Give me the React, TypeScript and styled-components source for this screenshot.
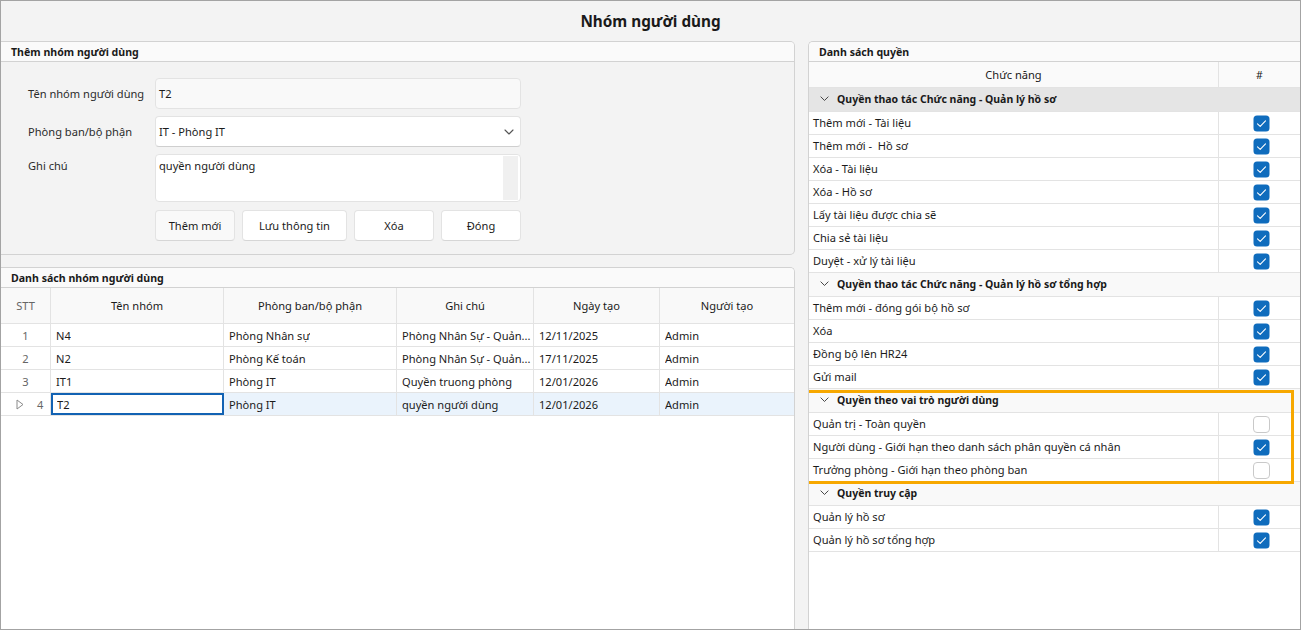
import React from 'react';
import styled, { createGlobalStyle } from 'styled-components';

const Global = createGlobalStyle`
  html, body { margin: 0; padding: 0; background: #f3f3f3; }
  * { box-sizing: border-box; }
  body {
    font-family: "Noto Sans", "Open Sans", sans-serif;
    font-size: 11.1px;
    color: #1b1b1b;
  }
`;

const Window = styled.div`
  width: 1301px;
  height: 630px;
  border: 1px solid #a3a3a3;
  background: #f3f3f3;
  display: flex;
  flex-direction: column;
  overflow: hidden;
`;

const TitleBar = styled.div`
  height: 40px;
  flex: none;
  display: flex;
  align-items: center;
  justify-content: center;
  font-weight: 700;
  font-size: 15.3px;
  color: #1a1a1a;
`;

const Main = styled.div`
  flex: 1;
  display: flex;
  gap: 13px;
  min-height: 0;
`;

const LeftCol = styled.div`
  width: 794px;
  flex: none;
  display: flex;
  flex-direction: column;
  gap: 12px;
`;

const Panel = styled.section<{ $h?: number; $side: 'left' | 'right' }>`
  ${(p) => (p.$h ? `height: ${p.$h}px; flex: none;` : 'flex: 1; min-height: 0;')}
  display: flex;
  flex-direction: column;
  background: #f3f3f3;
  border: 1px solid #d2d2d2;
  ${(p) => (p.$side === 'left' ? 'border-left: none;' : 'border-right: none;')}
  ${(p) => (p.$h ? '' : 'border-bottom: none;')}
  border-radius: ${(p) => (p.$side === 'left' ? (p.$h ? '0 5px 5px 0' : '0 5px 0 0') : '5px 0 0 0')};
  overflow: hidden;
`;

const PanelHeader = styled.div`
  height: 20px;
  flex: none;
  display: flex;
  align-items: center;
  padding-left: 10px;
  background: #fafafa;
  border-bottom: 1px solid #d2d2d2;
  font-weight: 700;
  font-size: 10.6px;
  color: #1a1a1a;
`;

const Form = styled.div`
  display: grid;
  grid-template-columns: 127px 366px;
  row-gap: 7px;
  padding: 16px 0 0 27px;
`;

const Label = styled.div<{ $top?: boolean }>`
  display: flex;
  align-items: ${(p) => (p.$top ? 'flex-start' : 'center')};
  padding-top: ${(p) => (p.$top ? '4px' : '0')};
  color: #2b2b2b;
`;

const Field = styled.div<{ $bg?: string; $h?: number }>`
  height: ${(p) => p.$h ?? 31}px;
  background: ${(p) => p.$bg ?? '#ffffff'};
  border: 1px solid #e3e3e3;
  border-radius: 4px;
  display: flex;
  align-items: center;
  padding-left: 3px;
  color: #1b1b1b;
  position: relative;
`;

const SelectField = styled(Field)`
  justify-content: space-between;
  padding-right: 6px;
  border-bottom-color: #cfcfcf;
`;

const TextArea = styled(Field)`
  align-items: flex-start;
  padding-top: 3px;
  padding-right: 2px;
  justify-content: space-between;
`;

const ScrollTrack = styled.div`
  width: 15px;
  align-self: stretch;
  margin-top: -2px;
  margin-bottom: 1px;
  background: #f0f0f0;
`;

const ButtonRow = styled.div`
  grid-column: 2;
  display: flex;
  gap: 7px;
  margin-top: 1px;
`;

const Button = styled.div<{ $w: number; $muted?: boolean }>`
  width: ${(p) => p.$w}px;
  height: 31px;
  display: flex;
  align-items: center;
  justify-content: center;
  background: ${(p) => (p.$muted ? '#f9f9f9' : '#ffffff')};
  border: 1px solid #e3e3e3;
  border-bottom-color: #d6d6d6;
  border-radius: 4px;
  color: #1b1b1b;
`;

/* left grid */
const GridBody = styled.div`
  flex: 1;
  background: #ffffff;
`;

const GridRow = styled.div<{ $h: number; $bg?: string }>`
  display: grid;
  grid-template-columns: 50px 173px 173px 137px 126px 1fr;
  height: ${(p) => p.$h}px;
  background: ${(p) => p.$bg ?? '#ffffff'};
  border-bottom: 1px solid #e3e3e3;
`;

const Cell = styled.div<{ $center?: boolean; $muted?: boolean; $bg?: string; $focus?: boolean }>`
  display: flex;
  align-items: center;
  justify-content: ${(p) => (p.$center ? 'center' : 'flex-start')};
  padding-left: ${(p) => (p.$center ? '0' : p.$focus ? '4px' : '5px')};
  border-right: 1px solid #e3e3e3;
  color: ${(p) => (p.$muted ? '#666666' : '#1b1b1b')};
  background: ${(p) => p.$bg ?? 'transparent'};
  white-space: nowrap;
  overflow: hidden;
  ${(p) => (p.$focus ? 'border: 2px solid #1262b3;' : '')}
  &:last-child { border-right: none; }
`;

const CellText = styled.span`
  overflow: hidden;
  text-overflow: ellipsis;
  white-space: nowrap;
`;

const Indicator = styled.span`
  display: flex;
  align-items: center;
  gap: 13px;
  margin-left: 10px;
`;

/* right permissions */
const RightCol = styled.div`
  flex: 1;
  display: flex;
  flex-direction: column;
  min-width: 0;
`;

const PermBody = styled.div`
  flex: 1;
  background: #ffffff;
`;

const PermHead = styled.div`
  display: grid;
  grid-template-columns: 410px 1fr;
  height: 26px;
  background: #fafafa;
  border-bottom: 1px solid #e3e3e3;
`;

const PermHeadCell = styled.div`
  display: flex;
  align-items: center;
  justify-content: center;
  color: #1b1b1b;
  border-right: 1px solid #e3e3e3;
  &:last-child { border-right: none; font-size: 10.5px; }
`;

const GroupRow = styled.div<{ $active?: boolean }>`
  height: 24px;
  display: flex;
  align-items: center;
  gap: 8px;
  padding-left: 11px;
  padding-bottom: 1px;
  background: ${(p) => (p.$active ? '#e5e5e5' : '#f9f9f9')};
  border-bottom: 1px solid #e3e3e3;
  font-weight: 700;
  font-size: 10.5px;
  color: #1a1a1a;
`;

const PermRow = styled.div`
  display: grid;
  grid-template-columns: 410px 1fr;
  height: 23px;
  border-bottom: 1px solid #e3e3e3;
`;

const PermName = styled.div`
  display: flex;
  align-items: center;
  padding-left: 4px;
  padding-bottom: 1px;
  border-right: 1px solid #e3e3e3;
  white-space: pre;
  color: #1b1b1b;
`;

const PermCheck = styled.div`
  display: flex;
  align-items: center;
  justify-content: center;
  padding-left: 3px;
`;

const Highlighted = styled.div`
  position: relative;
  &::after {
    content: '';
    position: absolute;
    top: 1px;
    bottom: -2px;
    left: -3px;
    right: 6px;
    border: 3px solid #f7a800;
    pointer-events: none;
  }
`;

const ChevronDown = ({ size = 9, color = '#444' }: { size?: number; color?: string }) => (
  <svg width={size} height={size * 0.6} viewBox="0 0 10 6" fill="none">
    <polyline points="1,1 5,5 9,1" stroke={color} strokeWidth="1.1" strokeLinecap="round" strokeLinejoin="round" />
  </svg>
);

const RowArrow = () => (
  <svg width="8" height="11" viewBox="0 0 8 11" fill="none">
    <polygon points="1,1 7,5.5 1,10" stroke="#8a8a8a" strokeWidth="1" strokeLinejoin="round" fill="none" />
  </svg>
);

const Check = ({ on }: { on: boolean }) =>
  on ? (
    <svg width="17" height="17" viewBox="0 0 17 17">
      <rect x="0.5" y="0.5" width="16" height="16" rx="3.5" fill="#0f6cbd" />
      <polyline points="4.5,8.8 7.2,11.3 12.5,5.8" fill="none" stroke="#ffffff" strokeWidth="1.1" strokeLinecap="round" strokeLinejoin="round" />
    </svg>
  ) : (
    <svg width="17" height="17" viewBox="0 0 17 17">
      <rect x="0.5" y="0.5" width="16" height="16" rx="3.5" fill="#ffffff" stroke="#c9c9c9" />
    </svg>
  );

type Group = { title: string; active?: boolean; highlight?: boolean; items: [string, boolean][] };

const groups: Group[] = [
  {
    title: 'Quyền thao tác Chức năng - Quản lý hồ sơ',
    active: true,
    items: [
      ['Thêm mới - Tài liệu', true],
      ['Thêm mới -  Hồ sơ', true],
      ['Xóa - Tài liệu', true],
      ['Xóa - Hồ sơ', true],
      ['Lấy tài liệu được chia sẽ', true],
      ['Chia sẻ tài liệu', true],
      ['Duyệt - xử lý tài liệu', true],
    ],
  },
  {
    title: 'Quyền thao tác Chức năng - Quản lý hồ sơ tổng hợp',
    items: [
      ['Thêm mới - đóng gói bộ hồ sơ', true],
      ['Xóa', true],
      ['Đồng bộ lên HR24', true],
      ['Gửi mail', true],
    ],
  },
  {
    title: 'Quyền theo vai trò người dùng',
    highlight: true,
    items: [
      ['Quản trị - Toàn quyền', false],
      ['Người dùng - Giới hạn theo danh sách phân quyền cá nhân', true],
      ['Trưởng phòng - Giới hạn theo phòng ban', false],
    ],
  },
  {
    title: 'Quyền truy cập',
    items: [
      ['Quản lý hồ sơ', true],
      ['Quản lý hồ sơ tổng hợp', true],
    ],
  },
];

const rows = [
  ['1', 'N4', 'Phòng Nhân sự', 'Phòng Nhân Sự - Quản...', '12/11/2025', 'Admin'],
  ['2', 'N2', 'Phòng Kế toán', 'Phòng Nhân Sự - Quản...', '17/11/2025', 'Admin'],
  ['3', 'IT1', 'Phòng IT', 'Quyền truong phòng', '12/01/2026', 'Admin'],
  ['4', 'T2', 'Phòng IT', 'quyền người dùng', '12/01/2026', 'Admin'],
];

const GroupBlock = ({ g }: { g: Group }) => (
  <>
    <GroupRow $active={g.active}>
      <ChevronDown />
      <span>{g.title}</span>
    </GroupRow>
    {g.items.map(([name, on], i) => (
      <PermRow key={i}>
        <PermName>{name}</PermName>
        <PermCheck>
          <Check on={on} />
        </PermCheck>
      </PermRow>
    ))}
  </>
);

export default function App() {
  return (
    <>
      <Global />
      <Window>
        <TitleBar>Nhóm người dùng</TitleBar>
        <Main>
          <LeftCol>
            <Panel $h={214} $side="left">
              <PanelHeader>Thêm nhóm người dùng</PanelHeader>
              <Form>
                <Label>Tên nhóm người dùng</Label>
                <Field $bg="#f9f9f9">T2</Field>
                <Label>Phòng ban/bộ phận</Label>
                <SelectField>
                  <span>IT - Phòng IT</span>
                  <ChevronDown size={10} color="#555" />
                </SelectField>
                <Label $top>Ghi chú</Label>
                <TextArea $h={48}>
                  <span>quyền người dùng</span>
                  <ScrollTrack />
                </TextArea>
                <ButtonRow>
                  <Button $w={80} $muted>Thêm mới</Button>
                  <Button $w={105}>Lưu thông tin</Button>
                  <Button $w={80}>Xóa</Button>
                  <Button $w={80}>Đóng</Button>
                </ButtonRow>
              </Form>
            </Panel>
            <Panel $side="left">
              <PanelHeader>Danh sách nhóm người dùng</PanelHeader>
              <GridBody>
                <GridRow $h={36} $bg="#f9f9f9">
                  <Cell $center $muted>STT</Cell>
                  <Cell $center>Tên nhóm</Cell>
                  <Cell $center>Phòng ban/bộ phận</Cell>
                  <Cell $center>Ghi chú</Cell>
                  <Cell $center>Ngày tạo</Cell>
                  <Cell $center>Người tạo</Cell>
                </GridRow>
                {rows.map((r, i) => {
                  const sel = i === 3;
                  return (
                    <GridRow key={i} $h={23} $bg={sel ? '#eaf3fc' : '#ffffff'}>
                      {sel ? (
                        <Cell $muted $bg="#ffffff">
                          <Indicator>
                            <RowArrow />
                            <span>{r[0]}</span>
                          </Indicator>
                        </Cell>
                      ) : (
                        <Cell $center $muted>{r[0]}</Cell>
                      )}
                      <Cell $focus={sel} $bg={sel ? '#ffffff' : undefined}><CellText>{r[1]}</CellText></Cell>
                      <Cell><CellText>{r[2]}</CellText></Cell>
                      <Cell><CellText>{r[3]}</CellText></Cell>
                      <Cell><CellText>{r[4]}</CellText></Cell>
                      <Cell><CellText>{r[5]}</CellText></Cell>
                    </GridRow>
                  );
                })}
              </GridBody>
            </Panel>
          </LeftCol>
          <RightCol>
            <Panel $side="right">
              <PanelHeader>Danh sách quyền</PanelHeader>
              <PermBody>
                <PermHead>
                  <PermHeadCell>Chức năng</PermHeadCell>
                  <PermHeadCell>#</PermHeadCell>
                </PermHead>
                {groups.map((g, i) =>
                  g.highlight ? (
                    <Highlighted key={i}>
                      <GroupBlock g={g} />
                    </Highlighted>
                  ) : (
                    <GroupBlock key={i} g={g} />
                  )
                )}
              </PermBody>
            </Panel>
          </RightCol>
        </Main>
      </Window>
    </>
  );
}
